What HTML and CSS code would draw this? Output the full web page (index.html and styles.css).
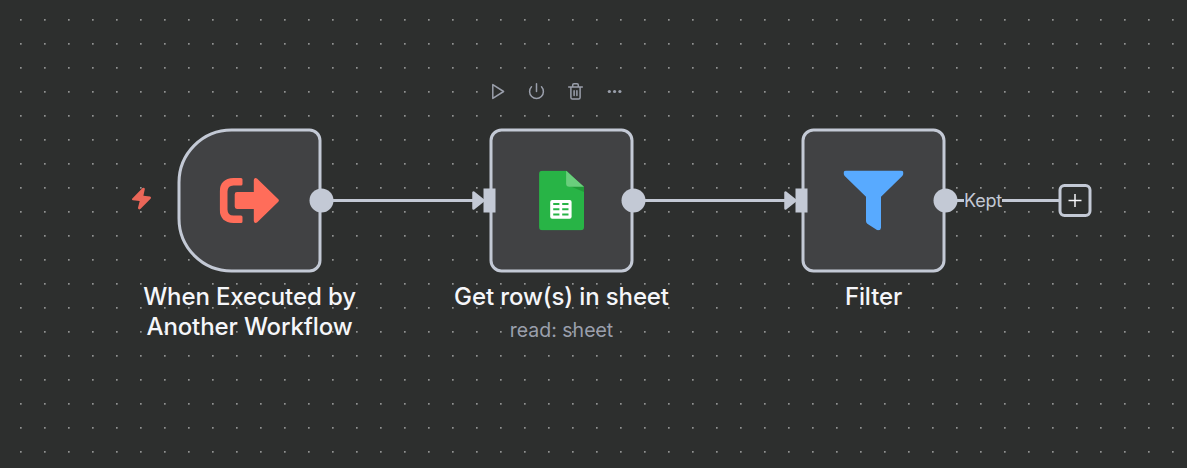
FILE: index.html
```
<!DOCTYPE html>
<html lang="en">
<head>
<meta charset="utf-8">
<title>Workflow</title>
<link rel="stylesheet" href="styles.css">
</head>
<body>
<main class="canvas">
  <svg class="layer" width="1187" height="468">
    <defs>
      <pattern id="grid" width="24" height="24" patternUnits="userSpaceOnUse" x="20" y="19">
        <circle class="dot" cx="0.88" cy="0.88" r="0.8"/>
      </pattern>
    </defs>
    <rect width="1187" height="468" fill="url(#grid)"/>
    <g class="edges">
      <path d="M321.5 200.5H474M633.5 200.5H786M945.5 200.5H1060"/>
      <path class="arrow" d="M473.5 192.5V208.5L483.5 200.5Z"/>
      <path class="arrow" d="M785.5 192.5V208.5L795.5 200.5Z"/>
    </g>
  </svg>

  <svg class="bolt" viewBox="0 0 22 24"><path d="M12 1.6 1.6 12.2Q1 13.5 2.3 13.8L9.2 14.4 7.4 21.8Q8.3 23.6 9.9 22.4L20.3 11.9Q21 10.6 19.6 10.1L12.9 9.2 14.4 2.2Q13.4 .6 12 1.6Z"/></svg>

  <section class="node trigger">
    <div class="box">
      <svg class="icon" viewBox="0 0 60 60"><path d="M21.5 7.5Q23 7.5 23 9V13.5Q23 15 21.5 15H14Q8 15 8 21V39Q8 45 14 45H21.5Q23 45 23 46.5V51Q23 52.5 21.5 52.5H14Q.3 52 .3 39V21Q.3 8 14 7.5Z"/><path d="M17.5 21.6H34.3V9.5Q34.8 6.6 37.5 8L58.8 28.8Q60 30 58.8 31.2L37.5 52Q34.8 53.4 34.3 50.5V38.4H17.5Q15.2 38.4 15.2 36V24Q15.2 21.6 17.5 21.6Z"/></svg>
    </div>
    <i class="output"></i>
    <h2 class="title">When Executed by<br>Another Workflow</h2>
  </section>

  <section class="node sheet">
    <div class="toolbar">
      <svg viewBox="0 0 20 20"><path d="M5.3 3.1V16.9L16.1 10Z"/></svg>
      <svg viewBox="0 0 20 20"><path d="M10 2.2V10M5 5.3A6.9 6.9 0 1 0 15 5.3"/></svg>
      <svg viewBox="0 0 20 20"><path d="M3.2 5.6H16.8M7.2 5.4V3.6Q7.2 2.3 8.5 2.3H11.5Q12.8 2.3 12.8 3.6V5.4M5.4 5.8V16Q5.4 17.6 7 17.6H13Q14.6 17.6 14.6 16V5.8M8.6 9.2V14M11.4 9.2V14"/></svg>
      <svg class="more" viewBox="0 0 20 20"><circle cx="4.8" cy="10" r="1.6"/><circle cx="10.1" cy="10" r="1.6"/><circle cx="15.4" cy="10" r="1.6"/></svg>
    </div>
    <div class="box">
      <svg class="icon" viewBox="0 0 60 60"><path fill="#28b446" d="M10.8 .3H35L52.5 17V56.5Q52.5 59.7 49.3 59.7H10.8Q7.6 59.7 7.6 56.5V3.5Q7.6 .3 10.8 .3Z"/><path fill="#219b38" d="M36.5 14.8 52.5 21.5V16L46 13Z"/><path fill="#6ace7c" d="M34.6 .3 52.5 16.3H37.8Q34.6 16.3 34.6 13.1Z"/><rect x="18.7" y="29.4" width="21.4" height="18.9" rx="2" fill="#fff"/><path stroke="#28b446" stroke-width="2" d="M21.7 33.6H27.9M30.7 33.6H37M21.7 38.8H27.9M30.7 38.8H37M21.7 44.1H27.9M30.7 44.1H37"/></svg>
    </div>
    <i class="input"></i><i class="output"></i>
    <h2 class="title">Get row(s) in sheet</h2>
    <p class="subtitle">read: sheet</p>
  </section>

  <section class="node filter">
    <div class="box">
      <svg class="icon" viewBox="0 0 60 60"><path d="M2.7 0H57.3Q60 .1 60 2.8 60 4.2 58.8 5.4L37.5 26.3V57.2Q37 60.8 33.5 59.5L23.8 53.2Q22.5 52.2 22.5 50.6V26.3L1.2 5.4Q0 4.2 0 2.8 .1 .1 2.7 0Z"/></svg>
    </div>
    <i class="input"></i><i class="output"></i>
    <h2 class="title">Filter</h2>
  </section>

  <span class="edge-label">Kept</span>
  <svg class="add" viewBox="0 0 34 34"><rect x="2" y="2" width="30" height="30" rx="4.5"/><path d="M10.5 17H23.5M17 10.5V23.5"/></svg>
</main>
</body>
</html>
```
FILE: styles.css
```
body { margin: 0; font-family: Inter, sans-serif; }
.canvas { position: relative; width: 1187px; height: 468px; overflow: hidden; background: #2d2f2e; }
.layer { display: block; }
.dot { fill: #b4b5b5; }
.edges path { fill: none; stroke: #c3c9d5; stroke-width: 3; }
.edges .arrow { fill: #c3c9d5; stroke-width: 2.5; stroke-linejoin: round; }
.bolt { position: absolute; left: 131px; top: 187px; width: 22px; height: 24px; fill: #ea6658; transform: translate(-.5px, -.5px); }

.node { position: absolute; top: 129px; width: 144px; height: 144px; display: flex; flex-direction: column; align-items: center; }
.trigger { left: 178px; }
.sheet { left: 490px; }
.filter { left: 802px; }
.box, .input, .output, .toolbar svg { transform: translate(-.5px, -.5px); }
.box { flex: none; box-sizing: border-box; width: 144px; height: 144px; border: 3px solid #c3c9d5; border-radius: 12px; background: #414244; display: flex; align-items: center; justify-content: center; }
.trigger .box { border-radius: 54px 12px 12px 54px; }
.icon { width: 60px; height: 60px; }
.trigger .icon { fill: #ff6d5a; }
.filter .icon { fill: #58aaff; }
.output { position: absolute; right: -12px; top: 60px; width: 24px; height: 24px; border-radius: 50%; background: #c3c9d5; }
.input { position: absolute; left: -6px; top: 60px; width: 12px; height: 24px; background: #c3c9d5; }
.title { margin: 8.5px 0 0 -1px; font-size: 24px; line-height: 30px; font-weight: 500; letter-spacing: -.12px; color: #f5f6f9; white-space: nowrap; text-align: center; }
.subtitle { margin: 6px 0 0 -1px; font-size: 19.5px; line-height: 24px; color: #9a9fac; white-space: nowrap; }

.toolbar { position: absolute; top: -52px; left: -5px; padding: 5px 3px; display: flex; gap: 19px; background: #2d2f2e; }
.toolbar svg { width: 20px; height: 20px; fill: none; stroke: #9a9fab; stroke-width: 1.5; stroke-linecap: round; stroke-linejoin: round; }
.toolbar .more { fill: #9a9fab; stroke: none; }

.edge-label { position: absolute; left: 964px; top: 190px; height: 21px; font-size: 18px; line-height: 21px; letter-spacing: -.25px; color: #c3c9d5; background: #2d2f2e; }
.add { position: absolute; left: 1058px; top: 184px; width: 34px; height: 34px; fill: #2d2f2e; stroke: #c3c9d5; stroke-width: 3; transform: translateY(-.5px); }
.add path { stroke: #f5f6f9; stroke-width: 1.5; }
```
